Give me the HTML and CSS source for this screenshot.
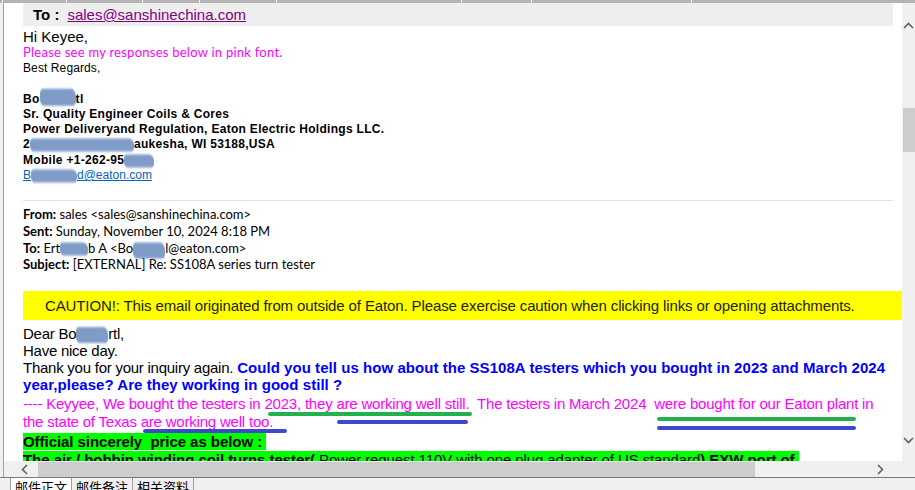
FILE: index.html
```html
<!DOCTYPE html>
<html lang="en">
<head>
    <meta charset="UTF-8">
    <title>RE: SS108A series turn tester</title>
    <link rel="stylesheet" href="styles.css">
</head>
<body>
    <div class="window">
        <div class="topbar">
            <span></span><span></span><span></span><span></span><span></span><span></span><span></span><span></span><span></span>
        </div>

        <div class="middle">
            <div class="edge"></div>
            <div class="viewport">
                <div class="page">
                    <div class="to-box"><b>To :</b><a href="#">sales@sanshinechina.com</a></div>

                    <div class="hi">Hi Keyee,</div>
                    <div class="note">Please see my responses below in pink font.</div>

                    <div class="sig">
                        <div>Best Regards,</div>
                        <div>&nbsp;</div>
                        <div class="b">Bo<span class="redact r-name"></span>tl</div>
                        <div class="b">Sr. Quality Engineer Coils &amp; Cores</div>
                        <div class="b">Power Deliveryand Regulation, Eaton Electric Holdings LLC.</div>
                        <div class="b">2<span class="redact r-addr"></span>aukesha, WI 53188,USA</div>
                        <div class="b">Mobile +1-262-95<span class="redact r-phone"></span></div>
                        <div><a class="mail" href="#">B<span class="redact r-mail"></span>d@eaton.com</a></div>
                    </div>

                    <div class="rule"></div>

                    <div class="meta">
                        <div><b>From:</b> sales &lt;sales@sanshinechina.com&gt;</div>
                        <div><b>Sent:</b> Sunday, November 10, 2024 8:18 PM</div>
                        <div><b>To:</b> Ert<span class="redact r-to1"></span>b A &lt;Bo<span class="redact r-to2"></span>l@eaton.com&gt;</div>
                        <div><b>Subject:</b> [EXTERNAL] Re: SS108A series turn tester</div>
                    </div>

                    <div class="caution">CAUTION!: This email originated from outside of Eaton. Please exercise caution when clicking links or opening attachments.</div>

                    <div class="body">
                        <div>Dear Bo<span class="redact r-dear"></span>rtl,</div>
                        <div>Have nice day.</div>
                        <div>Thank you for your inquiry again. <b class="ask">Could you tell us how about the SS108A testers which you bought in 2023 and March 2024</b></div>
                        <div><b class="ask">year,please? Are they working in good still ?</b></div>
                    </div>

                    <div class="reply">
                        <div>---- Keyyee, We bought the testers in 2023, they are working well still.&nbsp; The testers in March 2024&nbsp; were bought for our Eaton plant in</div>
                        <div>the state of Texas are working well too.</div>
                    </div>

                    <div class="price">
                        <div><span class="hl"><b>Official sincerely&nbsp; price as below :&nbsp;</b></span></div>
                        <div><span class="hl"><b>The air / bobbin winding coil turns tester(</b> Power request 110V with one plug adapter of US standard<b>) EXW port of&nbsp;</b></span></div>
                    </div>
                </div>

                <!-- pen marks drawn over the mail -->
                <span class="mark green m1"></span>
                <span class="mark blue m2"></span>
                <span class="mark blue m3"></span>
                <span class="mark green m4"></span>
                <span class="mark blue m5"></span>
            </div>

            <div class="vscroll">
                <svg class="arrow-up" width="11" height="7" viewBox="0 0 11 7"><polyline points="1,6 5.5,1.5 10,6" fill="none" stroke="#606060" stroke-width="1.6"/></svg>
                <div class="vthumb"></div>
                <svg class="arrow-down" width="11" height="7" viewBox="0 0 11 7"><polyline points="1,1 5.5,5.5 10,1" fill="none" stroke="#606060" stroke-width="1.6"/></svg>
            </div>
        </div>

        <div class="hrow">
            <div class="edge"></div>
            <div class="hscroll">
                <svg class="arrow-left" width="7" height="11" viewBox="0 0 7 11"><polyline points="6,1 1.5,5.5 6,10" fill="none" stroke="#606060" stroke-width="1.6"/></svg>
                <div class="hthumb"></div>
                <svg class="arrow-right" width="7" height="11" viewBox="0 0 7 11"><polyline points="1,1 5.5,5.5 1,10" fill="none" stroke="#606060" stroke-width="1.6"/></svg>
            </div>
            <div class="corner"></div>
        </div>

        <div class="tabs">
            <div class="tab active">邮件正文</div>
            <div class="tab">邮件备注</div>
            <div class="tab">相关资料</div>
        </div>
    </div>
</body>
</html>
```

FILE: styles.css
```css
html, body {
    margin: 0;
    padding: 0;
    overflow: hidden;
    background: #f0f0f0;
}
.window {
    width: 915px;
    height: 490px;
    display: flex;
    flex-direction: column;
    font-family: "Liberation Sans", Arial, sans-serif;
    color: #000;
}

/* column header strip */
.topbar {
    height: 3px;
    display: flex;
    background: #b4b4b4;
}
.topbar span {
    border-right: 1px solid #f4f4f4;
}
.topbar span:nth-child(1) { width: 2px; }
.topbar span:nth-child(2) { width: 63px; }
.topbar span:nth-child(3) { width: 75px; }
.topbar span:nth-child(4) { width: 56px; }
.topbar span:nth-child(5) { width: 76px; }
.topbar span:nth-child(6) { width: 184px; }
.topbar span:nth-child(7) { width: 69px; }
.topbar span:nth-child(8) { width: 159px; }
.topbar span:nth-child(9) { flex: 1; border-right: none; }

.middle {
    height: 458px;
    display: flex;
}
.edge {
    width: 3px;
    background: #f0f0f0;
    border-right: 1px solid #a0a0a0;
}
.viewport {
    position: relative;
    flex: 1;
    background: #fff;
    overflow: hidden;
}
.page {
    padding: 0 9px 0 19px;
    white-space: nowrap;
}

.to-box {
    height: 23px;
    background: #eeeeee;
    display: flex;
    align-items: center;
    padding-left: 10px;
    font-size: 15px;
}
.to-box b {
    margin-right: 8px;
}
.to-box a {
    color: #800080;
}

.hi {
    margin-top: 2px;
    font-size: 15px;
    line-height: 17px;
}
.note {
    font-family: Lato, "Open Sans", sans-serif;
    font-size: 13px;
    line-height: 15px;
    color: #ff00ff;
    letter-spacing: 0.25px;
}
.sig {
    margin-top: 1px;
    font-size: 12px;
    line-height: 15.3px;
    letter-spacing: 0.1px;
}
.sig .b {
    font-weight: bold;
    letter-spacing: 0.3px;
}
.sig .mail {
    color: #0563c1;
    letter-spacing: 0;
}

/* smudged-out parts of names and numbers */
.redact {
    display: inline-block;
    height: 10px;
    vertical-align: middle;
    background: #7f9cc9;
    border-radius: 3px 5px 3px 4px;
    filter: blur(0.7px);
    transform: scaleY(1.3);
}
.r-name { width: 36px; transform: scaleY(1.7) translateY(-1px); }
.r-addr { width: 104px; }
.r-phone { width: 30px; }
.r-mail { width: 46px; }
.r-to1 { width: 28px; }
.r-to2 { width: 32px; transform: scaleY(1.6) translateY(1px); }
.r-dear { width: 32px; transform: scaleY(1.6); }

.rule {
    height: 1px;
    background: #e1e1e1;
    margin-top: 17px;
}
.meta {
    margin-top: 5px;
    font-family: Lato, "Open Sans", sans-serif;
    font-size: 13px;
    line-height: 16.7px;
}

.caution {
    margin: 18px -9px 0 0;
    height: 29px;
    line-height: 29px;
    padding-left: 22px;
    background: #ffff00;
    color: #222;
    font-size: 15px;
    letter-spacing: -0.12px;
}

.body {
    margin-top: 5px;
    font-size: 15px;
    line-height: 17px;
    letter-spacing: -0.25px;
}
.ask {
    color: #0000ff;
    letter-spacing: 0.05px;
}
.reply {
    margin-top: 2px;
    font-size: 15px;
    line-height: 18px;
    color: #ff00ff;
    letter-spacing: -0.2px;
}
.price {
    margin-top: 2px;
    font-size: 15px;
    line-height: 18px;
    letter-spacing: -0.1px;
}
.price b {
    letter-spacing: -0.05px;
}
.hl {
    background: #00ff00;
}

.mark {
    position: absolute;
    height: 4px;
    border-radius: 2px;
}
.green { background: #22b14c; }
.blue { background: #3f48cc; }
.m1 { left: 264px; top: 409px; width: 204px; }
.m2 { left: 333px; top: 417px; width: 131px; }
.m3 { left: 139px; top: 426px; width: 144px; }
.m4 { left: 653px; top: 414px; width: 199px; }
.m5 { left: 653px; top: 423px; width: 199px; }

.vscroll {
    width: 13px;
    background: #f0f0f0;
    display: flex;
    flex-direction: column;
    align-items: center;
}
.arrow-up {
    margin-top: 19px;
}
.vthumb {
    width: 12px;
    margin-left: 1px;
    height: 44px;
    margin-top: 79px;
    background: #cdcdcd;
}
.arrow-down {
    margin-top: auto;
    margin-bottom: 17px;
}

.hrow {
    height: 16px;
    display: flex;
}
.hscroll {
    flex: 1;
    display: flex;
    align-items: center;
    background: #f0f0f0;
}
.arrow-left {
    margin-left: 17px;
}
.hthumb {
    width: 717px;
    height: 15px;
    margin-left: 10px;
    background: #cdcdcd;
}
.arrow-right {
    margin-left: auto;
    margin-right: 18px;
}
.corner {
    width: 13px;
    background: #f0f0f0;
}

.tabs {
    flex: 1;
    border-top: 1px solid #7a7a7a;
    display: flex;
    padding-left: 10px;
    overflow: hidden;
}
.tab {
    height: 20px;
    padding: 1px 4px 0;
    border: 1px solid #a0a0a0;
    border-top: none;
    margin-right: -1px;
    background: #f0f0f0;
    font-family: "Noto Sans CJK SC", sans-serif;
    font-size: 13px;
    line-height: 16px;
    color: #000;
}
.tab.active {
    background: #fff;
}
```
